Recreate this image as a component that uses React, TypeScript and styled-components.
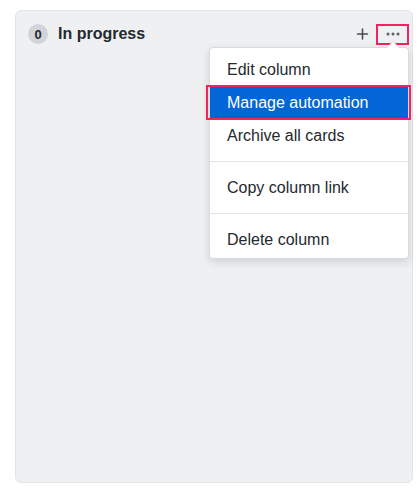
import React from 'react';
import styled, { createGlobalStyle } from 'styled-components';
import { Plus } from 'lucide-react';

const GlobalStyle = createGlobalStyle`
  html, body {
    margin: 0;
    padding: 0;
    background: #ffffff;
    font-family: "Liberation Sans", Arial, Helvetica, sans-serif;
    color: #24292e;
  }
`;

const Page = styled.div`
  padding: 10px 0 0 15px;
`;

const Column = styled.div`
  box-sizing: border-box;
  width: 398px;
  height: 473px;
  background: #eff0f2;
  border: 1px solid #e1e4e8;
  border-radius: 6px;
`;

const Header = styled.div`
  display: flex;
  align-items: center;
  height: 22px;
  padding: 12px 3px 0 12px;
`;

const Count = styled.span`
  display: inline-flex;
  align-items: center;
  justify-content: center;
  width: 20px;
  height: 20px;
  border-radius: 50%;
  background: #d1d5da;
  font-size: 13px;
  font-weight: 700;
  color: #24292e;
  margin-right: 10px;
`;

const Title = styled.h3`
  flex: 1;
  margin: 0;
  font-size: 16px;
  font-weight: 700;
  color: #24292e;
`;

const Actions = styled.div`
  display: flex;
  align-items: center;
  gap: 5px;
`;

const IconButton = styled.button<{ $marked?: boolean }>`
  position: relative;
  display: inline-flex;
  align-items: center;
  justify-content: center;
  box-sizing: border-box;
  height: 21px;
  width: ${(p) => (p.$marked ? '33px' : '17px')};
  padding: 0;
  border: ${(p) => (p.$marked ? '2px solid #f0245f' : 'none')};
  background: transparent;
  color: #444d56;
  cursor: pointer;
`;

const Menu = styled.ul`
  position: absolute;
  top: calc(100% + 4px);
  right: -2px;
  box-sizing: border-box;
  width: 200px;
  margin: 0;
  padding: 5px 0 2px;
  list-style: none;
  background: #ffffff;
  border: 1px solid #d7dade;
  border-radius: 4px;
  box-shadow: 0 3px 8px rgba(27, 31, 35, 0.15);
  text-align: left;
  z-index: 10;

  &::before,
  &::after {
    content: '';
    position: absolute;
    right: 9px;
    border: 6px solid transparent;
  }
  &::before {
    top: -13px;
    border-bottom-color: #d7dade;
  }
  &::after {
    top: -12px;
    border-bottom-color: #ffffff;
  }
`;

const Item = styled.li<{ $active?: boolean }>`
  position: relative;
  height: 33px;
  line-height: 33px;
  padding-left: 17px;
  font-size: 16px;
  color: ${(p) => (p.$active ? '#ffffff' : '#24292e')};
  background: ${(p) => (p.$active ? '#0366d6' : 'transparent')};
  white-space: nowrap;

  ${(p) =>
    p.$active &&
    `
    &::after {
      content: '';
      position: absolute;
      top: -1px;
      bottom: -1px;
      left: -4px;
      right: -3px;
      border: 2px solid #f0245f;
    }
  `}
`;

const Divider = styled.li`
  height: 1px;
  margin: 9px 0;
  background: #e1e4e8;
`;

const Dots = () => (
  <svg width="16" height="16" viewBox="0 0 16 16" fill="#586069">
    <circle cx="3" cy="8" r="1.5" />
    <circle cx="8" cy="8" r="1.5" />
    <circle cx="13" cy="8" r="1.5" />
  </svg>
);

export default function App() {
  return (
    <Page>
      <GlobalStyle />
      <Column>
        <Header>
          <Count>0</Count>
          <Title>In progress</Title>
          <Actions>
            <IconButton aria-label="Add a note">
              <Plus size={20} strokeWidth={2.2} color="#444d56" />
            </IconButton>
            <IconButton $marked aria-label="Column menu">
              <Dots />
              <Menu>
                <Item>Edit column</Item>
                <Item $active>Manage automation</Item>
                <Item>Archive all cards</Item>
                <Divider />
                <Item>Copy column link</Item>
                <Divider />
                <Item>Delete column</Item>
              </Menu>
            </IconButton>
          </Actions>
        </Header>
      </Column>
    </Page>
  );
}
